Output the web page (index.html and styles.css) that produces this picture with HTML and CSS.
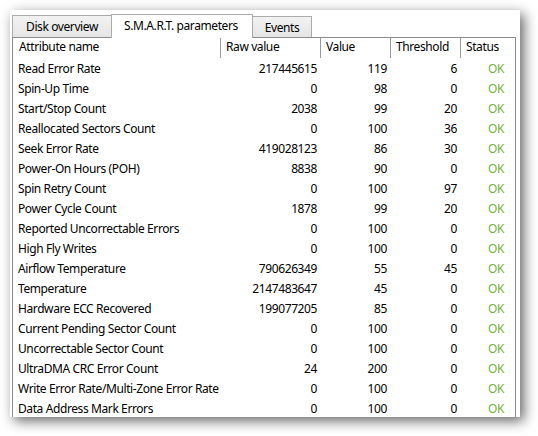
FILE: index.html
```html
<!DOCTYPE html>
<html>
<head>
<meta charset="utf-8">
<link rel="stylesheet" href="styles.css">
</head>
<body>
<div class="window">
  <div class="tabs">
    <div class="tab">Disk overview</div>
    <div class="tab active">S.M.A.R.T. parameters</div>
    <div class="tab events">Events</div>
  </div>
  <div class="panel">
    <div class="grid">
      <div class="hd first">Attribute name</div>
      <div class="hd">Raw value</div>
      <div class="hd">Value</div>
      <div class="hd">Threshold</div>
      <div class="hd">Status</div>

      <div class="name">Read Error Rate</div><div class="num">217445615</div><div class="num">119</div><div class="num">6</div><div class="ok">OK</div>
      <div class="name">Spin-Up Time</div><div class="num">0</div><div class="num">98</div><div class="num">0</div><div class="ok">OK</div>
      <div class="name">Start/Stop Count</div><div class="num">2038</div><div class="num">99</div><div class="num">20</div><div class="ok">OK</div>
      <div class="name">Reallocated Sectors Count</div><div class="num">0</div><div class="num">100</div><div class="num">36</div><div class="ok">OK</div>
      <div class="name">Seek Error Rate</div><div class="num">419028123</div><div class="num">86</div><div class="num">30</div><div class="ok">OK</div>
      <div class="name">Power-On Hours (POH)</div><div class="num">8838</div><div class="num">90</div><div class="num">0</div><div class="ok">OK</div>
      <div class="name">Spin Retry Count</div><div class="num">0</div><div class="num">100</div><div class="num">97</div><div class="ok">OK</div>
      <div class="name">Power Cycle Count</div><div class="num">1878</div><div class="num">99</div><div class="num">20</div><div class="ok">OK</div>
      <div class="name">Reported Uncorrectable Errors</div><div class="num">0</div><div class="num">100</div><div class="num">0</div><div class="ok">OK</div>
      <div class="name">High Fly Writes</div><div class="num">0</div><div class="num">100</div><div class="num">0</div><div class="ok">OK</div>
      <div class="name">Airflow Temperature</div><div class="num">790626349</div><div class="num">55</div><div class="num">45</div><div class="ok">OK</div>
      <div class="name">Temperature</div><div class="num">2147483647</div><div class="num">45</div><div class="num">0</div><div class="ok">OK</div>
      <div class="name">Hardware ECC Recovered</div><div class="num">199077205</div><div class="num">85</div><div class="num">0</div><div class="ok">OK</div>
      <div class="name">Current Pending Sector Count</div><div class="num">0</div><div class="num">100</div><div class="num">0</div><div class="ok">OK</div>
      <div class="name">Uncorrectable Sector Count</div><div class="num">0</div><div class="num">100</div><div class="num">0</div><div class="ok">OK</div>
      <div class="name">UltraDMA CRC Error Count</div><div class="num">24</div><div class="num">200</div><div class="num">0</div><div class="ok">OK</div>
      <div class="name">Write Error Rate/Multi-Zone Error Rate</div><div class="num">0</div><div class="num">100</div><div class="num">0</div><div class="ok">OK</div>
      <div class="name">Data Address Mark Errors</div><div class="num">0</div><div class="num">100</div><div class="num">0</div><div class="ok">OK</div>
    </div>
  </div>
</div>
</body>
</html>
```

FILE: styles.css
```css
html, body {
  margin: 0;
  padding: 0;
  background: #ffffff;
  width: 538px;
  height: 436px;
  overflow: hidden;
  font-family: "Noto Sans", "DejaVu Sans", sans-serif;
  font-size: 12px;
  letter-spacing: -0.4px;
  color: #000;
}

.window {
  margin: 10px 0 0 10px;
  width: 510px;
  height: 407px;
  box-sizing: border-box;
  background: #ffffff;
  box-shadow: 4px 4px 12px rgba(0, 0, 0, 0.6);
  padding: 4px 4px 0 2px;
  display: flex;
  flex-direction: column;
  overflow: hidden;
}

.tabs {
  display: flex;
  align-items: flex-end;
  height: 23px;
  flex: none;
}

.tab {
  height: 22px;
  box-sizing: border-box;
  border: 1px solid #acacac;
  border-bottom: none;
  background: linear-gradient(#f2f2f2, #e5e5e5);
  padding: 1px 0 0;
  line-height: 20px;
  white-space: nowrap;
  width: 100px;
  text-align: center;
}

.tab + .tab {
  margin-left: -1px;
}

.tab.active {
  height: 24px;
  width: 142px;
  background: #ffffff;
  line-height: 20px;
  margin-bottom: -1px;
  position: relative;
  z-index: 1;
  text-align: left;
  padding: 1px 0 0 12px;
}

.tab.events {
  height: 21px;
  width: 60px;
  padding: 1px 0 0;
  line-height: 19px;
}

.panel {
  flex: 1;
  border: 1px solid #8c8c8c;
  border-bottom: none;
  overflow: hidden;
}

.grid {
  display: grid;
  grid-template-columns: 207px 100px 70px 70px 1fr;
  grid-auto-rows: 20px;
  line-height: 20px;
}

.hd {
  border-left: 1px solid #9a9a9a;
  padding-left: 5px;
  line-height: 18px;
  white-space: nowrap;
}

.hd.first {
  border-left: none;
  padding-left: 6px;
}

.name,
.num,
.ok {
  padding-top: 1px;
}

.name {
  padding-left: 5px;
  white-space: nowrap;
}

.num {
  text-align: right;
  padding-right: 3px;
}

.ok {
  color: #74b03c;
  padding-left: 28px;
}
```
